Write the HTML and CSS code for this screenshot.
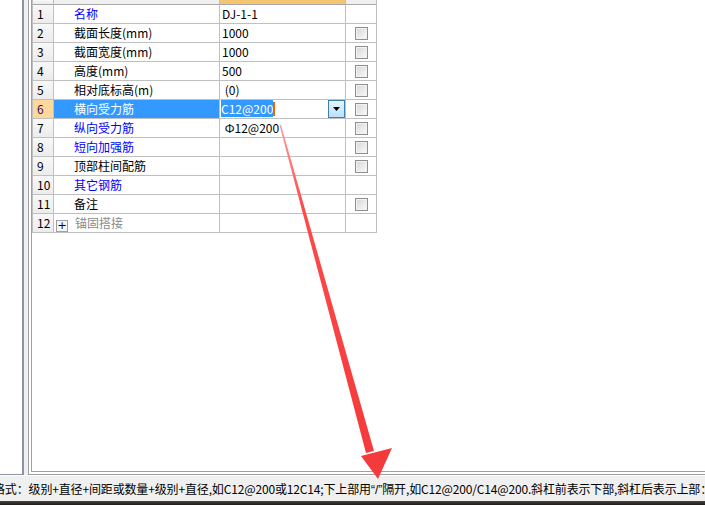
FILE: index.html
```html
<!DOCTYPE html>
<html>
<head>
    <title>钢筋属性</title>
    <link rel="stylesheet" href="styles.css">
</head>
<body>

<div class="app">
    <div class="workspace">
        <div class="side"></div>
        <div class="gutter"></div>
        <div class="panel">
            <div class="frame">
                <div class="grid">
                    <div class="row head">
                        <div class="num"></div>
                        <div class="name"></div>
                        <div class="value picked"></div>
                        <div class="check"></div>
                    </div>
                    <div class="row">
                        <div class="num">1</div>
                        <div class="name blue">名称</div>
                        <div class="value">DJ-1-1</div>
                        <div class="check"></div>
                    </div>
                    <div class="row">
                        <div class="num">2</div>
                        <div class="name">截面长度(mm)</div>
                        <div class="value">1000</div>
                        <div class="check"><span class="box"></span></div>
                    </div>
                    <div class="row">
                        <div class="num">3</div>
                        <div class="name">截面宽度(mm)</div>
                        <div class="value">1000</div>
                        <div class="check"><span class="box"></span></div>
                    </div>
                    <div class="row">
                        <div class="num">4</div>
                        <div class="name">高度(mm)</div>
                        <div class="value">500</div>
                        <div class="check"><span class="box"></span></div>
                    </div>
                    <div class="row">
                        <div class="num">5</div>
                        <div class="name">相对底标高(m)</div>
                        <div class="value">&nbsp;(0)</div>
                        <div class="check"><span class="box"></span></div>
                    </div>
                    <div class="row current">
                        <div class="num">6</div>
                        <div class="name">横向受力筋</div>
                        <div class="value editing">
                            <span class="sel">C12@200</span><span class="caret"></span>
                            <span class="drop"><svg width="7" height="4" viewBox="0 0 7 4"><path d="M0 0H7L3.5 4Z" fill="#000"/></svg></span>
                        </div>
                        <div class="check"><span class="box"></span></div>
                    </div>
                    <div class="row">
                        <div class="num">7</div>
                        <div class="name blue">纵向受力筋</div>
                        <div class="value">&nbsp;Ф12@200</div>
                        <div class="check"><span class="box"></span></div>
                    </div>
                    <div class="row">
                        <div class="num">8</div>
                        <div class="name blue">短向加强筋</div>
                        <div class="value"></div>
                        <div class="check"><span class="box"></span></div>
                    </div>
                    <div class="row">
                        <div class="num">9</div>
                        <div class="name">顶部柱间配筋</div>
                        <div class="value"></div>
                        <div class="check"><span class="box"></span></div>
                    </div>
                    <div class="row">
                        <div class="num">10</div>
                        <div class="name blue">其它钢筋</div>
                        <div class="value"></div>
                        <div class="check"></div>
                    </div>
                    <div class="row">
                        <div class="num">11</div>
                        <div class="name">备注</div>
                        <div class="value"></div>
                        <div class="check"><span class="box"></span></div>
                    </div>
                    <div class="row">
                        <div class="num">12</div>
                        <div class="name group"><span class="plus">+</span>锚固搭接</div>
                        <div class="value"></div>
                        <div class="check"></div>
                    </div>
                </div>
            </div>
        </div>
    </div>
    <div class="status">格式：级别+直径+间距或数量+级别+直径,如C12@200或12C14;下上部用<span class="quote">“/”</span>隔开,如C12@200/C14@200.斜杠前表示下部,斜杠后表示上部：</div>
    <div class="taskbar"></div>
</div>

<svg class="arrow" width="705" height="505" viewBox="0 0 705 505">
    <defs>
        <linearGradient id="shaft" x1="0" y1="0" x2="0" y2="1">
            <stop offset="0" stop-color="#ff9a9a"/>
            <stop offset="0.25" stop-color="#ff4a4a"/>
            <stop offset="1" stop-color="#f43a3a"/>
        </linearGradient>
    </defs>
    <path d="M279.5 125 L281 125 L374 451 L366 453 Z" fill="url(#shaft)"/>
    <path d="M378 479 L361 456 L392 448 Z" fill="#f43a3a"/>
</svg>

</body>
</html>
```

FILE: styles.css
```css
body {
    margin: 0;
    width: 705px;
    height: 505px;
    overflow: hidden;
    font-family: "Noto Sans CJK SC", "Liberation Sans", sans-serif;
    font-size: 12px;
    color: #000;
    background-color: #fff;
    position: relative;
}

.app {
    display: flex;
    flex-direction: column;
    height: 505px;
}

.workspace {
    display: flex;
    height: 475px;
}

.side {
    width: 24px;
    box-sizing: border-box;
    background-color: #fff;
    border-right: 2px solid #8b93a7;
    border-bottom: 1px solid #8b93a7;
}

.gutter {
    width: 4px;
    background-color: #f0f0f0;
}

.panel {
    flex: 1;
    display: flex;
    border-left: 1px solid #a0a0a0;
    border-bottom: 1px solid #a0a0a0;
    padding: 0 0 2px 2px;
    background-color: #fff;
}

.frame {
    flex: 1;
    border-left: 1px solid #a0a0a0;
    border-bottom: 1px solid #a0a0a0;
    background-color: #fff;
}

.grid {
    display: flex;
    flex-direction: column;
    width: 345px;
    border-left: 1px solid #c0c0c0;
}

.row {
    display: grid;
    grid-template-columns: 21px 166px 126px 31px;
    height: 19px;
}

.row > div {
    border-right: 1px solid #c0c0c0;
    border-bottom: 1px solid #c0c0c0;
    line-height: 18px;
    white-space: nowrap;
    overflow: hidden;
    position: relative;
}

.row.head {
    height: 5px;
}

.row.head > div {
    background-color: #f0f0f0;
    border-bottom-color: #a8a8a8;
}

.row.head .picked {
    background-color: #f4c46e;
}

.num {
    background: linear-gradient(#f8f8f8, #ececec);
    padding-left: 4px;
}

.name {
    padding-left: 20px;
}

.value {
    padding-left: 2px;
}

.check {
    display: flex;
    align-items: center;
    justify-content: center;
}

.blue {
    color: #0000ff;
}

.group {
    color: #8a8a8a;
    padding-left: 2px;
}

.plus {
    display: inline-block;
    width: 10px;
    height: 10px;
    line-height: 9px;
    border: 1px solid #a0a0a0;
    background-color: #f4f4f4;
    color: #000;
    text-align: center;
    font-family: "DejaVu Sans", sans-serif;
    font-size: 11px;
    margin-right: 7px;
    vertical-align: -1px;
}

.box {
    display: block;
    width: 11px;
    height: 11px;
    border: 1px solid #8f8f8f;
    background: linear-gradient(135deg, #d6d6d6, #fbfbfb);
    box-shadow: inset 0 0 0 1px #f2f2f2;
    margin-left: 1px;
}

.current .num {
    background: #fcd99b;
    color: #3a0d5f;
}

.current .name {
    background-color: #3399ff;
    color: #fff;
}

.editing {
    padding-left: 1px;
}

.sel {
    background-color: #3399ff;
    color: #fff;
}

.caret {
    display: inline-block;
    width: 2px;
    height: 14px;
    background-color: #e06a00;
    vertical-align: -2px;
}

.drop {
    position: absolute;
    right: 0;
    top: 0;
    width: 15px;
    height: 16px;
    border: 1px solid #3c7fb1;
    background: linear-gradient(#e8f5fd, #b9e0fb);
    display: flex;
    align-items: center;
    justify-content: center;
}

.status {
    height: 25px;
    line-height: 25px;
    background-color: #f0f0f0;
    border-top: 1px solid #fff;
    white-space: nowrap;
    overflow: hidden;
    text-indent: -7px;
    letter-spacing: -0.15px;
}

.quote {
    font-family: "Liberation Sans", sans-serif;
    letter-spacing: 0;
}

.taskbar {
    flex: 1;
    background: linear-gradient(#4a443c, #1e1b18);
}

.arrow {
    position: absolute;
    left: 0;
    top: 0;
    pointer-events: none;
}
```
